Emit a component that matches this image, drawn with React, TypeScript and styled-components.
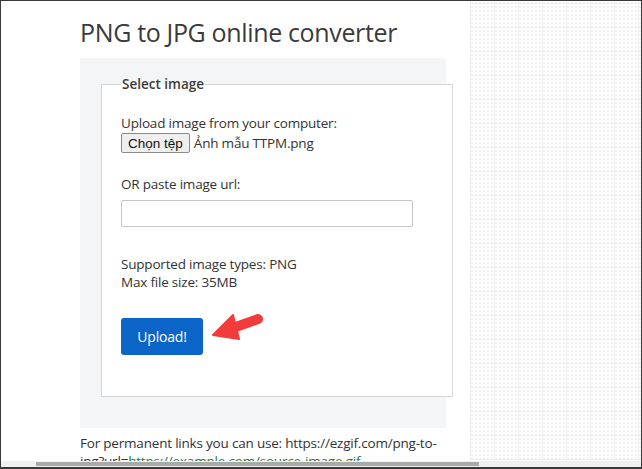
import React from "react";
import styled, { createGlobalStyle } from "styled-components";

const Global = createGlobalStyle`
  html, body { margin: 0; padding: 0; background: #fff; }
  body { font-family: "Open Sans", "Noto Sans", sans-serif; color: #333; }
  * { box-sizing: border-box; }
`;

const Frame = styled.div`
  position: relative;
  width: 642px;
  height: 469px;
  border: 1px solid #3a3a3a;
  border-bottom-width: 2px;
  overflow: hidden;
  display: flex;
  flex-direction: column;
  background: #fff;
`;

const Viewport = styled.div`
  flex: 1;
  display: flex;
  overflow: hidden;
`;

const Main = styled.main`
  width: 469px;
  flex-shrink: 0;
  padding-left: 79px;
`;

const Pattern = styled.aside`
  flex: 1;
  background-color: #fefefe;
  background-image:
    radial-gradient(circle, #e9e9e9 0.6px, transparent 0.9px),
    linear-gradient(to right, #f0f0f0 1px, transparent 1px),
    linear-gradient(to bottom, #f0f0f0 1px, transparent 1px);
  background-size: 4px 4px, 24px 24px, 24px 24px;
  background-position: 0 0, 0 0, 0 2px;
`;

const Title = styled.h1`
  margin: 13px 0 0;
  font-family: "Open Sans", sans-serif;
  font-weight: 400;
  font-size: 25px;
  line-height: 36px;
  color: #3a3a3a;
  letter-spacing: -0.35px;
`;

const Panel = styled.section`
  margin-top: 8px;
  width: 366px;
  height: 370px;
  background: #f4f5f7;
  padding: 17px 0 0 21px;
`;

const Fieldset = styled.fieldset`
  width: 352px;
  height: 322px;
  margin: 0;
  padding: 21px 20px 0 19px;
  border: 1px solid #d6d6d6;
  background: #fff;
  font-size: 13.5px;
`;

const Legend = styled.legend`
  margin: 0;
  padding: 0 1px;
  font-size: 13.5px;
  font-weight: 600;
  color: #3c3c3c;
`;

const Text = styled.p`
  margin: 0;
  line-height: 18px;
  color: #333;
  letter-spacing: -0.2px;
`;

const FileRow = styled.div`
  display: flex;
  align-items: center;
  gap: 4px;
  height: 20px;
  margin-top: 1px;
  letter-spacing: -0.2px;
`;

const FileButton = styled.button`
  height: 20px;
  padding: 0 6px;
  border: 1px solid #8a8a8a;
  border-radius: 2px;
  background: #efefef;
  font-family: "Liberation Sans", Arial, sans-serif;
  font-size: 13.5px;
  color: #111;
`;

const Group = styled.div<{ $gap: number }>`
  margin-top: ${(p) => p.$gap}px;
`;

const UrlInput = styled.input`
  display: block;
  margin-top: 7px;
  width: 292px;
  height: 27px;
  border: 1px solid #c6c6c6;
  border-radius: 2px;
  background: #fff;
`;

const UploadButton = styled.button`
  display: block;
  margin-top: 27px;
  width: 82px;
  height: 37px;
  border: none;
  border-radius: 3px;
  background: #0b64c8;
  color: #fff;
  font-family: "Open Sans", sans-serif;
  font-size: 14px;
  letter-spacing: -0.2px;
`;

const ArrowMark = styled.svg`
  position: absolute;
  left: 205px;
  top: 304px;
`;

const Footer = styled.p`
  margin: 6px 0 0;
  width: 380px;
  font-size: 13.5px;
  line-height: 18px;
  color: #333;
  letter-spacing: -0.2px;
`;

const Link = styled.a`
  color: #2e7d32;
  text-decoration: none;
`;

const Scrollbar = styled.div`
  height: 6px;
  background: #f0f0f0;
  padding-left: 35px;
`;

const Thumb = styled.div`
  width: 443px;
  height: 4px;
  margin-top: 1px;
  background: #a9a9a9;
`;

export default function App() {
  return (
    <>
      <Global />
      <Frame>
        <Viewport>
          <Main>
            <Title>PNG to JPG online converter</Title>
            <Panel>
              <Fieldset>
                <Legend>Select image</Legend>
                <Text>Upload image from your computer:</Text>
                <FileRow>
                  <FileButton>Chọn tệp</FileButton>
                  <span>Ảnh mẫu TTPM.png</span>
                </FileRow>
                <Group $gap={22}>
                  <Text>OR paste image url:</Text>
                  <UrlInput type="text" />
                </Group>
                <Group $gap={28}>
                  <Text>Supported image types: PNG</Text>
                  <Text>Max file size: 35MB</Text>
                </Group>
                <UploadButton>Upload!</UploadButton>
              </Fieldset>
            </Panel>
            <Footer>
              For permanent links you can use: https://ezgif.com/png-to-jpg?url=
              <Link href="#">https://example.com/source-image.gif</Link>
            </Footer>
          </Main>
          <Pattern />
        </Viewport>
        <Scrollbar>
          <Thumb />
        </Scrollbar>
        <ArrowMark width="65" height="45" viewBox="0 0 65 45">
          <line x1="27" y1="23" x2="52" y2="14" stroke="#f23c3c" strokeWidth="10" strokeLinecap="round" />
          <polygon points="7,30 27,10 33,34" fill="#f23c3c" strokeLinejoin="round" stroke="#f23c3c" strokeWidth="2" />
        </ArrowMark>
      </Frame>
    </>
  );
}
